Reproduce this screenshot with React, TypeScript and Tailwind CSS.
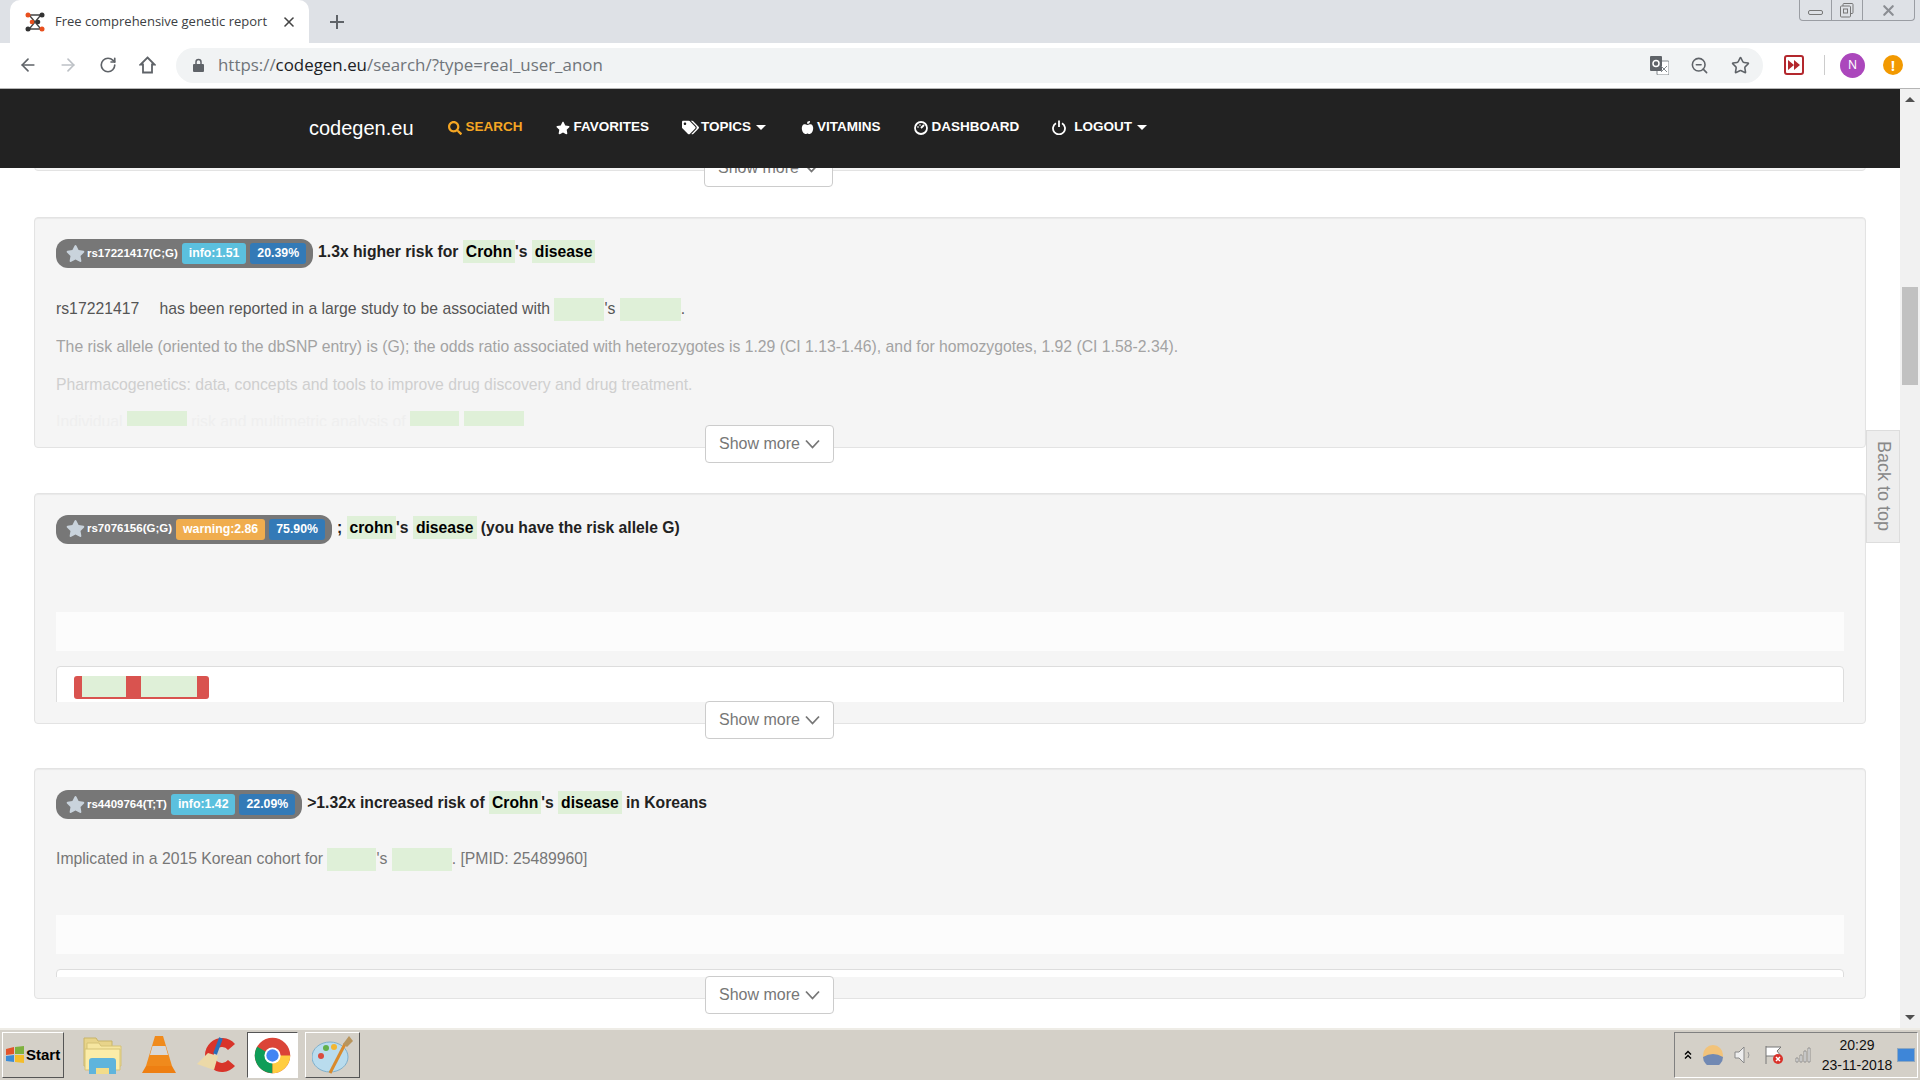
import React from "react";
import {ArrowLeft, ArrowRight, RotateCw, Star, X, ZoomOut} from "lucide-react";
import {FaAppleAlt, FaSearch, FaStar, FaTags} from "react-icons/fa";

function Green({w}: {w: number}) {
    return <span style={{width: w}} className="inline-block h-[23px] bg-[#dff0d8] align-middle"/>;
}

function Mark({children}: {children: React.ReactNode}) {
    return <span className="bg-[#dff0d8] px-[3px] py-[3px] text-black">{children}</span>;
}

function Pill({rs, badge, badgeClass, pct}: {rs: string, badge: string, badgeClass: string, pct: string}) {
    return (
        <span className="inline-flex h-[29px] items-center rounded-[12px] bg-[#777] pl-[10px] pr-[7px] align-middle">
            <FaStar className="mb-[1px] mr-[2px] h-[19px] w-[19px] text-[#c9d3dc]"/>
            <span className="text-[11.5px] font-bold text-white">{rs}</span>
            <span className={"ml-[4px] flex h-[21px] items-center rounded-[3px] px-[7px] text-[12.3px] font-bold text-white " + badgeClass}>{badge}</span>
            <span className="ml-[4px] flex h-[21px] items-center rounded-[3px] bg-[#337ab7] px-[7px] text-[12.3px] font-bold text-white">{pct}</span>
        </span>
    );
}

function ShowMore({className}: {className: string}) {
    return (
        <button className={"absolute left-[670px] flex h-[38px] w-[129px] items-center justify-center gap-[5px] rounded-[4px] border border-[#ccc] bg-white text-[16px] text-[#777] " + className}>
            Show more
            <svg width="15" height="10" viewBox="0 0 15 10" fill="none" stroke="#777" strokeWidth="1.8"><path d="M1 1.5L7.5 8.5L14 1.5"/></svg>
        </button>
    );
}

function Card({title, children}: {title: React.ReactNode, children: React.ReactNode}) {
    return (
        <div className="relative mb-[44.5px] h-[231px] rounded-[4px] border border-[#e3e3e3] bg-[#f5f5f5] px-[21px] pt-[21px] shadow-[inset_0_1px_1px_rgba(0,0,0,0.05)]">
            <div className="h-[187px] overflow-hidden">
                <div className="flex h-[29px] items-center gap-[5px] overflow-visible text-[15.7px] font-bold text-[#222]">{title}</div>
                {children}
            </div>
            <ShowMore className="top-[207px]"/>
        </div>
    );
}

function TabStrip() {
    return (
        <div className="flex h-[43px] items-end bg-[#dee1e6] pl-[10px]">
            <div className="flex h-[43px] w-[299px] items-center rounded-t-[10px] bg-white pl-[15px]">
                <svg width="20" height="20" viewBox="0 0 20 20">
                    <path d="M3 3H17M5 4L15 16M15 4L5 16M3 17H17" stroke="#444" strokeWidth="1.3" fill="none"/>
                    <circle cx="3" cy="3" r="2.5" fill="#e8501e"/><circle cx="17" cy="3" r="2.5" fill="#333"/>
                    <circle cx="3" cy="17" r="2.5" fill="#333"/><circle cx="17" cy="17" r="2.5" fill="#e8501e"/>
                    <circle cx="7" cy="10" r="2.3" fill="#e8501e"/><circle cx="13" cy="10" r="2.3" fill="#333"/>
                </svg>
                <span className="ml-[10px] w-[213px] overflow-hidden whitespace-nowrap font-['Open_Sans',sans-serif] text-[13px] text-[#3c4043]">Free comprehensive genetic report</span>
                <X size={16} strokeWidth={2.4} className="ml-[13px] text-[#444]"/>
            </div>
            <svg width="16" height="16" viewBox="0 0 16 16" className="mb-[13px] ml-[20px]"><path d="M8 1V15M1 8H15" stroke="#5f6368" strokeWidth="2"/></svg>
            <div className="mb-[22px] ml-auto mr-[5px] flex h-[21px] w-[116px] rounded-b-[4px] border border-t-0 border-[#9a9da3] text-[#8a8d92]">
                <div className="flex w-[32px] items-center justify-center border-r border-[#9a9da3]"><span className="mt-[4px] h-[5px] w-[15px] rounded-[2px] border border-[#777]"/></div>
                <div className="flex w-[31px] items-center justify-center border-r border-[#9a9da3]">
                    <svg width="16" height="16" viewBox="0 0 16 16" fill="none" stroke="#777"><rect x="4" y="1.5" width="10" height="10" rx="1"/><rect x="1.5" y="4" width="10" height="11" rx="1" fill="#dee1e6"/><rect x="4.5" y="7" width="4" height="4"/></svg>
                </div>
                <div className="flex flex-1 items-center justify-center"><X size={17} strokeWidth={3} className="text-[#8b8e93]"/></div>
            </div>
        </div>
    );
}

function Toolbar() {
    return (
        <div className="flex h-[46px] items-center border-b border-[#b5b5b5] bg-white pb-[1px]">
            <ArrowLeft size={20} strokeWidth={2} className="ml-[18px] text-[#5f6368]"/>
            <ArrowRight size={20} strokeWidth={2} className="ml-[20px] text-[#bdc1c6]"/>
            <RotateCw size={18} strokeWidth={2.2} className="ml-[21px] text-[#5f6368]"/>
            <svg width="17" height="18" viewBox="0 0 17 18" fill="none" stroke="#5f6368" strokeWidth="1.8" className="ml-[22px]"><path d="M8.5 1.5L15.5 8.5H13V16.5H4V8.5H1.5Z"/></svg>
            <div className="ml-[20px] flex h-[35px] w-[1587px] items-center rounded-full bg-[#f1f3f4] pl-[17px]">
                <svg width="11" height="14" viewBox="0 0 11 14"><path d="M3 6V4A2.5 2.5 0 0 1 8 4V6" fill="none" stroke="#5f6368" strokeWidth="1.5"/><rect y="6" width="11" height="8" rx="1" fill="#5f6368"/></svg>
                <span className="ml-[14px] font-['Open_Sans',sans-serif] text-[16.9px] text-[#70757a]">https://<span className="text-[#202124]">codegen.eu</span>/search/?type=real_user_anon</span>
                <svg width="19" height="19" viewBox="0 0 19 19" className="ml-auto">
                    <rect x="7" y="5" width="12" height="14" rx="1" fill="#fff" stroke="#80868b"/>
                    <rect width="12" height="15" rx="1" fill="#5f6368"/>
                    <circle cx="6" cy="7.5" r="3" fill="none" stroke="#fff" strokeWidth="1.5"/>
                    <path d="M11 10L17 16M17 10L11 16" stroke="#80868b"/>
                </svg>
                <ZoomOut size={19} strokeWidth={2} className="ml-[21px] text-[#5f6368]"/>
                <Star size={19} strokeWidth={2} className="ml-[22px] mr-[13px] text-[#5f6368]"/>
            </div>
            <div className="ml-[21px] flex h-[20px] w-[20px] items-center justify-center rounded-[3px] border-2 border-[#b3282d]">
                <svg width="12" height="10" viewBox="0 0 12 10"><path d="M0 0L6 5L0 10ZM6 0L12 5L6 10Z" fill="#b3282d"/></svg>
            </div>
            <div className="ml-[20px] h-[20px] w-px bg-[#ccc]"/>
            <div className="ml-[15px] flex h-[25px] w-[25px] items-center justify-center rounded-full bg-[#ab47bc] text-[12px] text-white">N</div>
            <div className="ml-[18px] flex h-[20px] w-[20px] items-center justify-center rounded-full bg-[#f29900] text-[14px] font-bold text-white">!</div>
        </div>
    );
}

function NavBar() {
    return (
        <div className="flex h-[79px] shrink-0 items-center bg-[#222] pb-[2px] pl-[309px] pr-[20px] text-[13.5px] font-bold text-white">
            <span className="mr-[34px] text-[20px] font-normal">codegen.eu</span>
            <span className="flex items-center gap-[4px] text-[#f5a623]"><FaSearch size={14}/>SEARCH</span>
            <span className="ml-[33px] flex items-center gap-[4px]"><FaStar size={14}/>FAVORITES</span>
            <span className="ml-[33px] flex items-center gap-[2px]"><FaTags size={17}/>TOPICS<span className="ml-[3px] border-x-[5px] border-t-[5px] border-x-transparent border-t-white"/></span>
            <span className="ml-[35px] flex items-center gap-[3px]"><FaAppleAlt size={13}/>VITAMINS</span>
            <span className="ml-[33px] flex items-center gap-[4px]">
                <svg width="14" height="14" viewBox="0 0 14 14" fill="none" stroke="white" strokeWidth="1.8"><circle cx="7" cy="7" r="6"/><path d="M7 7L10 4M3.5 6H4.5M6 3.5V4.5"/></svg>
                DASHBOARD
            </span>
            <span className="ml-[33px] flex items-center gap-[8px]">
                <svg width="14" height="15" viewBox="0 0 14 15" fill="none" stroke="white" strokeWidth="1.8"><path d="M4 3.2A6 6 0 1 0 10 3.2M7 0.5V7"/></svg>
                LOGOUT<span className="-ml-[3px] border-x-[5px] border-t-[5px] border-x-transparent border-t-white"/>
            </span>
        </div>
    );
}

function Scrollbar() {
    return (
        <div className="relative flex w-[20px] shrink-0 flex-col items-center bg-[#f1f1f1]">
            <div className="mt-[8px] border-x-[5px] border-b-[5px] border-x-transparent border-b-[#505050]"/>
            <div className="mt-[185px] h-[98px] w-[16px] bg-[#c1c1c1]"/>
            <div className="mb-[8px] mt-auto border-x-[5px] border-t-[5px] border-x-transparent border-t-[#505050]"/>
        </div>
    );
}

function Content() {
    return (
        <div className="relative min-w-0 flex-1 overflow-hidden bg-white font-['Liberation_Sans',sans-serif]">
            <div className="mx-[34px] pt-[3px]">
                <div className="relative mb-[46px] h-0">
                    <div className="absolute inset-x-0 -top-[10px] h-[10px] rounded-b-[4px] border border-[#e3e3e3] bg-[#f5f5f5]"/>
                    <ShowMore className="-top-[22px]"/>
                </div>
                <Card title={<>
                    <Pill rs="rs17221417(C;G)" badge="info:1.51" badgeClass="bg-[#5bc0de]" pct="20.39%"/>
                    <span className="-mt-[3px]">1.3x higher risk for <Mark>Crohn</Mark>'s <Mark>disease</Mark></span>
                </>}>
                    <div className="mt-[29px] text-[15.75px] leading-[23px]">
                        <p className="mb-[14px] text-[#555]">rs17221417 <span className="ml-[16px]"/>has been reported in a large study to be associated with <Green w={50}/>'s <Green w={61}/>.</p>
                        <p className="mb-[14.5px] text-[#a3a3a3]">The risk allele (oriented to the dbSNP entry) is (G); the odds ratio associated with heterozygotes is 1.29 (CI 1.13-1.46), and for homozygotes, 1.92 (CI 1.58-2.34).</p>
                        <p className="mb-[14px] text-[#cfcfcf]">Pharmacogenetics: data, concepts and tools to improve drug discovery and drug treatment.</p>
                        <p className="text-[#efefef]">Individual <Green w={60}/> risk and multimetric analysis of <Green w={49}/> <Green w={60}/></p>
                    </div>
                </Card>
                <Card title={<>
                    <Pill rs="rs7076156(G;G)" badge="warning:2.86" badgeClass="bg-[#f0ad4e]" pct="75.90%"/>
                    <span className="-mt-[3px]">; <Mark>crohn</Mark>'s <Mark>disease</Mark> (you have the risk allele G)</span>
                </>}>
                    <div className="mt-[68px] h-[39px] bg-[#fcfcfc]"/>
                    <div className="mt-[15px] h-[60px] rounded-t-[4px] border border-[#ddd] bg-white px-[17px] pt-[9px]">
                        <div className="flex h-[23px] w-[135px] rounded-[3px] bg-[#d9534f] px-[8px]">
                            <div className="h-[21px] w-[44px] bg-[#dff0d8]"/>
                            <div className="ml-[15px] h-[21px] w-[56px] bg-[#dff0d8]"/>
                        </div>
                    </div>
                </Card>
                <Card title={<>
                    <Pill rs="rs4409764(T;T)" badge="info:1.42" badgeClass="bg-[#5bc0de]" pct="22.09%"/>
                    <span className="-mt-[3px]">&gt;1.32x increased risk of <Mark>Crohn</Mark>'s <Mark>disease</Mark> <span>in Koreans</span></span>
                </>}>
                    <p className="mt-[28px] text-[15.75px] leading-[23px] text-[#777]">Implicated in a 2015 Korean cohort for <Green w={49}/>'s <Green w={60}/>. [PMID: 25489960]</p>
                    <div className="mt-[44px] h-[39px] bg-[#fcfcfc]"/>
                    <div className="mt-[15px] h-[60px] rounded-t-[4px] border border-[#ddd] bg-white"/>
                </Card>
            </div>
            <div className="absolute right-0 top-[262px] flex h-[113px] w-[34px] items-center justify-center border border-[#ddd] bg-[#eee] text-[18px] text-[#888] [writing-mode:vertical-rl]">Back to top</div>
        </div>
    );
}

function FolderIcon() {
    return (
        <svg width="39" height="38" viewBox="0 0 39 38">
            <path d="M1 30V2H13L15 5H29V30Z" fill="#e8d48a" stroke="#c8b468"/>
            <path d="M4 30V7H16L18 10H38V30Z" fill="#f6e6a0" stroke="#d5c277"/>
            <path d="M2 34V13H37V34Z" fill="#fbeca8" stroke="#d5c277"/>
            <path d="M6 38V25Q6 22 9 22H30Q33 22 33 25V38H26V32H13V38Z" fill="#5fb4dc"/>
            <rect x="13" y="32" width="13" height="6" fill="#f2dc8a"/>
        </svg>
    );
}

function VlcIcon() {
    return (
        <svg width="34" height="38" viewBox="0 0 34 38">
            <path d="M13 0H21L30 30H4Z" fill="#f08a1c"/>
            <path d="M10.5 10H23.5L26 19H8Z" fill="#d8d8d8"/>
            <path d="M4 30H30L34 37H0Z" fill="#ee7f12"/>
        </svg>
    );
}

function CCleanerIcon() {
    return (
        <svg width="42" height="38" viewBox="0 0 42 38">
            <path d="M38 8A17 17 0 1 0 38 30L31 24A8 8 0 1 1 31 14Z" fill="#d8342a"/>
            <path d="M24 2L18 18" stroke="#2a6fb8" strokeWidth="4"/>
            <path d="M11 17L21 20L17 34L0 28Z" fill="#ecd9a8"/>
        </svg>
    );
}

function ChromeIcon() {
    return (
        <svg width="37" height="37" viewBox="0 0 48 48">
            <circle cx="24" cy="24" r="23" fill="#db4437"/>
            <path d="M24 24L24 47A23 23 0 0 1 4.1 12.5Z" fill="#0f9d58"/>
            <path d="M24 24H47A23 23 0 0 1 24 47Z" fill="#ffcd40"/>
            <circle cx="24" cy="24" r="10.5" fill="white"/><circle cx="24" cy="24" r="8" fill="#4285f4"/>
        </svg>
    );
}

function PaintIcon() {
    return (
        <svg width="42" height="38" viewBox="0 0 42 38">
            <ellipse cx="18" cy="21" rx="18" ry="15" fill="#b9dcee" stroke="#7fb0cc"/>
            <circle cx="9" cy="20" r="3" fill="#d94b3f"/><circle cx="14" cy="12" r="3" fill="#62b04a"/><circle cx="22" cy="11" r="3" fill="#f2b632"/>
            <path d="M18 37L33 8" stroke="#d98a2c" strokeWidth="3"/>
            <path d="M31 8L37 0L41 5L35 11Z" fill="#b8945c"/>
        </svg>
    );
}

function Taskbar() {
    return (
        <div className="flex h-[52px] shrink-0 items-center border-t-2 border-[#eeece6] bg-[#d4d0c8] pl-[2px] font-['Liberation_Sans',sans-serif]">
            <div className="flex h-[46px] w-[62px] items-center border border-[#fff] border-b-[#555] border-r-[#555] pl-[2px] text-[15px] font-bold text-black">
                <svg width="20" height="20" viewBox="0 0 20 20" className="mr-[1px]">
                    <path d="M1 4L9 2V9L1 10Z" fill="#e2542b"/><path d="M10 2L19 1V9L10 9Z" fill="#7eb13e"/>
                    <path d="M1 11L9 10V17L1 16Z" fill="#3c8cd6"/><path d="M10 10L19 10V18L10 17Z" fill="#f4bd2a"/>
                </svg>
                Start
            </div>
            <div className="ml-[19px]"><FolderIcon/></div>
            <div className="ml-[20px]"><VlcIcon/></div>
            <div className="ml-[21px]"><CCleanerIcon/></div>
            <div className="ml-[8px] flex h-[46px] w-[51px] items-center justify-center border border-[#555] border-b-white border-r-white bg-white"><ChromeIcon/></div>
            <div className="ml-[7px] flex h-[46px] w-[55px] items-center justify-center border border-white border-b-[#555] border-r-[#555]"><PaintIcon/></div>
            <div className="ml-auto mr-[2px] flex h-[46px] w-[244px] items-center border border-[#808080] border-b-white border-r-white pl-[8px]">
                <svg width="10" height="10" viewBox="0 0 10 10" fill="none" stroke="#000" strokeWidth="1.4"><path d="M2 4.5L5 1.5L8 4.5M2 8.5L5 5.5L8 8.5"/></svg>
                <svg width="20" height="20" viewBox="0 0 20 20" className="ml-[10px]"><circle cx="10" cy="10" r="10" fill="#f2c37a"/><path d="M0 12Q10 6 20 12A10 10 0 0 1 0 12Z" fill="#7189b3"/></svg>
                <svg width="18" height="18" viewBox="0 0 18 18" className="ml-[11px]"><path d="M1 6H5L10 1V17L5 12H1Z" fill="#eee" stroke="#888"/><path d="M14 6Q16 9 14 12" stroke="#999" fill="none"/></svg>
                <svg width="20" height="20" viewBox="0 0 20 20" className="ml-[12px]"><path d="M2 1V19M2 2H17L13 6L17 11H2" fill="white" stroke="#777"/><circle cx="14" cy="14" r="5" fill="#d9322a"/><path d="M12 12L16 16M16 12L12 16" stroke="white" strokeWidth="1.5"/></svg>
                <svg width="16" height="16" viewBox="0 0 16 16" className="ml-[11px]"><path d="M1 11H3V15H1ZM5 8H7V15H5ZM9 4H11V15H9ZM13 1H15V15H13Z" fill="#f2f2f2" stroke="#777" strokeWidth="0.7"/></svg>
                <div className="ml-[8px] flex w-[76px] flex-col items-center text-[14px] leading-[20px] text-[#111]">
                    <span>20:29</span>
                    <span className="whitespace-nowrap">23-11-2018</span>
                </div>
                <div className="ml-[2px] h-[14px] w-[18px] border border-[#8fa8c0] bg-[#3e86d8]"/>
            </div>
        </div>
    );
}

export default function App() {
    return (
        <div className="flex h-screen w-full flex-col overflow-hidden bg-white">
            <TabStrip/>
            <Toolbar/>
            <div className="flex min-h-0 flex-1">
                <div className="flex min-w-0 flex-1 flex-col font-['Liberation_Sans',sans-serif]">
                    <NavBar/>
                    <Content/>
                </div>
                <Scrollbar/>
            </div>
            <Taskbar/>
        </div>
    );
}
